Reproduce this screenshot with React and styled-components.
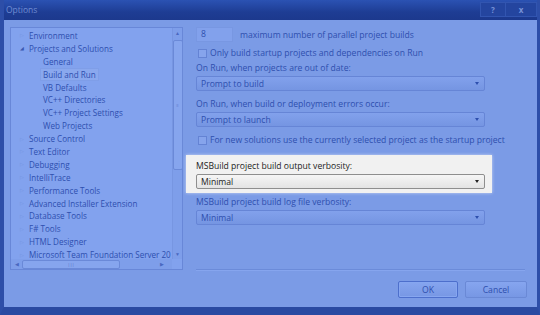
import React from "react";
import styled, { createGlobalStyle } from "styled-components";

const GlobalStyle = createGlobalStyle`
  body {
    margin: 0;
    background: #2a4aa3;
    font-family: "Open Sans", "Noto Sans", sans-serif;
  }
`;

const Window = styled.div`
  width: 540px;
  height: 315px;
  box-sizing: border-box;
  display: flex;
  flex-direction: column;
  background: #7b9be6;
  border-left: 4px solid #2d4ea8;
  border-right: 3px solid #2d4ea8;
  border-bottom: 8px solid #2a4aa2;
  overflow: hidden;
`;

const TitleBar = styled.div`
  height: 20px;
  margin-left: -4px;
  margin-right: -3px;
  flex-shrink: 0;
  display: flex;
  align-items: flex-start;
  justify-content: space-between;
  background: linear-gradient(to bottom, #2b52b3, #1e3d94 60%, #1c398d);
  .title {
    color: #6f8cd2;
    font-size: 8.5px;
    padding: 4px 0 0 6px;
  }
`;

const Caption = styled.div`
  display: flex;
  margin: 2px 3px 0 0;
  border: 1px solid #3255b0;
  background: #24459f;
`;

const CaptionButton = styled.div`
  width: ${(p) => p.$w}px;
  height: 13px;
  display: flex;
  align-items: center;
  justify-content: center;
  color: #7893d8;
  font-size: 8px;
  font-weight: 700;
  & + & {
    border-left: 1px solid #3255b0;
  }
`;

const Content = styled.div`
  flex: 1;
  display: flex;
  flex-direction: column;
  padding: 7px 0 0 6px;
`;

const MainRow = styled.div`
  display: flex;
  height: 243px;
`;

const Tree = styled.div`
  width: 173px;
  height: 243px;
  flex-shrink: 0;
  box-sizing: border-box;
  border: 1px solid #6887d8;
  background: #82a2ee;
  display: grid;
  grid-template-columns: 1fr 10px;
  grid-template-rows: 1fr 10px;
`;

const TreeList = styled.div`
  padding-top: 1px;
  overflow: hidden;
`;

const TreeRow = styled.div`
  height: 12.9px;
  display: flex;
  align-items: center;
  padding-left: ${(p) => (p.$child ? 30 : 9)}px;
  font-size: 8.1px;
  color: #2e4fae;
  white-space: nowrap;
  span {
    padding: 0 2px;
    background: ${(p) => (p.$selected ? "#8aa8ee" : "transparent")};
    box-shadow: ${(p) => (p.$selected ? "0 0 0 1px #7f9ee8" : "none")};
  }
`;

const Expander = styled.i`
  width: 7px;
  flex-shrink: 0;
  font-style: normal;
  font-size: 5px;
  color: ${(p) => (p.$open ? "#3a58b0" : "#7392e0")};
`;

const VScroll = styled.div`
  grid-row: 1;
  grid-column: 2;
  display: flex;
  flex-direction: column;
  align-items: center;
  border-left: 1px solid #7796e2;
  background: #7e9eea;
  font-size: 5px;
  color: #4a68c0;
  .thumb {
    width: 8px;
    height: 128px;
    margin: 2px 0 auto;
    border: 1px solid #6a89d8;
    border-radius: 2px;
    background: #86a5ee;
    display: flex;
    align-items: center;
    justify-content: center;
    font-size: 4px;
  }
  .arr {
    height: 10px;
    line-height: 10px;
  }
`;

const HScroll = styled.div`
  grid-row: 2;
  grid-column: 1;
  display: flex;
  align-items: center;
  padding: 0 4px;
  background: #7e9eea;
  font-size: 5px;
  color: #4a68c0;
  .thumb {
    width: 96px;
    height: 7px;
    margin-left: 3px;
    border: 1px solid #6a89d8;
    border-radius: 2px;
    background: #86a5ee;
    display: flex;
    align-items: center;
    justify-content: center;
    font-size: 4px;
  }
  .right {
    margin-left: auto;
    margin-right: 4px;
  }
`;

const Pane = styled.div`
  flex: 1;
  display: flex;
  flex-direction: column;
  padding-left: 13px;
`;

const Settings = styled.div`
  width: 289px;
  display: flex;
  flex-direction: column;
`;

const Label = styled.div`
  height: 12px;
  line-height: 12px;
  margin-top: ${(p) => p.$mt || 0}px;
  font-size: 8.6px;
  color: ${(p) => (p.$lit ? "#222" : "#2e4fae")};
  white-space: nowrap;
`;

const NumberRow = styled.div`
  display: flex;
  align-items: center;
  gap: 7px;
`;

const NumberBox = styled.div`
  width: 37px;
  height: 15px;
  box-sizing: border-box;
  border: 1px solid #7897e2;
  background: #82a1ec;
  padding-left: 4px;
  font-size: 8.6px;
  line-height: 13px;
  color: #2e4fae;
`;

const CheckRow = styled.div`
  display: flex;
  align-items: center;
  gap: 3px;
  height: 12px;
  margin-top: ${(p) => p.$mt || 0}px;
  padding-left: 2px;
  font-size: 8.6px;
  color: #2e4fae;
  white-space: nowrap;
`;

const Box = styled.div`
  width: 7px;
  height: 7px;
  flex-shrink: 0;
  border: 1px solid #6483d4;
  background: #86a4ec;
`;

const Select = styled.div`
  height: 15px;
  box-sizing: border-box;
  margin-top: ${(p) => p.$mt || 2}px;
  display: flex;
  align-items: center;
  justify-content: space-between;
  padding: 0 5px 0 4px;
  border: 1px solid ${(p) => (p.$lit ? "#8e8e8e" : "#6685d6")};
  border-radius: 2px;
  background: ${(p) =>
    p.$lit
      ? "linear-gradient(to bottom, #f6f6f6, #e3e3e3)"
      : "linear-gradient(to bottom, #82a1ec, #7595e2)"};
  font-size: 8.6px;
  color: ${(p) => (p.$lit ? "#222" : "#2e4fae")};
  &::after {
    content: "";
    border-left: 2.5px solid transparent;
    border-right: 2.5px solid transparent;
    border-top: 3px solid ${(p) => (p.$lit ? "#222" : "#2e4fae")};
  }
`;

const Spotlight = styled.div`
  margin: 9px -7px 0 -10px;
  padding: 5px 7px 4px 10px;
  background: #f1f1f1;
  box-shadow: 0 0 3px rgba(255, 255, 255, 0.6);
`;

const Separator = styled.div`
  margin-top: auto;
  width: 329px;
  height: 1px;
  background: #6b8bd9;
  box-shadow: 0 1px 0 #86a5ee;
`;

const Footer = styled.div`
  display: flex;
  justify-content: flex-end;
  gap: 7px;
  padding: 11px 10px 0 0;
`;

const Button = styled.div`
  width: ${(p) => p.$w}px;
  height: 17px;
  box-sizing: border-box;
  display: flex;
  align-items: center;
  justify-content: center;
  border: 1px solid ${(p) => (p.$default ? "#4d6fcc" : "#6a89d6")};
  border-radius: 2px;
  background: linear-gradient(to bottom, #86a5ef, #7797e4);
  box-shadow: ${(p) => (p.$default ? "inset 0 0 0 1px #86a6f0" : "none")};
  font-size: 8.6px;
  color: #2e4fae;
`;

const tree = [
  { label: "Environment" },
  { label: "Projects and Solutions", open: true },
  { label: "General", child: true },
  { label: "Build and Run", child: true, selected: true },
  { label: "VB Defaults", child: true },
  { label: "VC++ Directories", child: true },
  { label: "VC++ Project Settings", child: true },
  { label: "Web Projects", child: true },
  { label: "Source Control" },
  { label: "Text Editor" },
  { label: "Debugging" },
  { label: "IntelliTrace" },
  { label: "Performance Tools" },
  { label: "Advanced Installer Extension" },
  { label: "Database Tools" },
  { label: "F# Tools" },
  { label: "HTML Designer" },
  { label: "Microsoft Team Foundation Server 20" },
];

const App = () => {
  return (
    <>
      <GlobalStyle />
      <Window>
        <TitleBar>
          <span className="title">Options</span>
          <Caption>
            <CaptionButton $w={24}>?</CaptionButton>
            <CaptionButton $w={30}>x</CaptionButton>
          </Caption>
        </TitleBar>
        <Content>
          <MainRow>
            <Tree>
              <TreeList>
                {tree.map((item) => (
                  <TreeRow
                    key={item.label}
                    $child={item.child}
                    $selected={item.selected}
                  >
                    {!item.child && (
                      <Expander $open={item.open}>
                        {item.open ? "◢" : "▷"}
                      </Expander>
                    )}
                    <span>{item.label}</span>
                  </TreeRow>
                ))}
              </TreeList>
              <VScroll>
                <span className="arr">▲</span>
                <div className="thumb">≡</div>
                <span className="arr">▼</span>
              </VScroll>
              <HScroll>
                <span>◀</span>
                <div className="thumb">|||</div>
                <span className="right">▶</span>
              </HScroll>
            </Tree>
            <Pane>
              <Settings>
                <NumberRow>
                  <NumberBox>8</NumberBox>
                  <Label>maximum number of parallel project builds</Label>
                </NumberRow>
                <CheckRow $mt={5}>
                  <Box />
                  Only build startup projects and dependencies on Run
                </CheckRow>
                <Label $mt={3}>On Run, when projects are out of date:</Label>
                <Select>Prompt to build</Select>
                <Label $mt={7}>
                  On Run, when build or deployment errors occur:
                </Label>
                <Select>Prompt to launch</Select>
                <CheckRow $mt={7}>
                  <Box />
                  For new solutions use the currently selected project as the
                  startup project
                </CheckRow>
                <Spotlight>
                  <Label $lit>MSBuild project build output verbosity:</Label>
                  <Select $lit>Minimal</Select>
                </Spotlight>
                <Label $mt={3}>MSBuild project build log file verbosity:</Label>
                <Select>Minimal</Select>
              </Settings>
              <Separator />
            </Pane>
          </MainRow>
          <Footer>
            <Button $w={60} $default>
              OK
            </Button>
            <Button $w={62}>Cancel</Button>
          </Footer>
        </Content>
      </Window>
    </>
  );
};

export default App;
